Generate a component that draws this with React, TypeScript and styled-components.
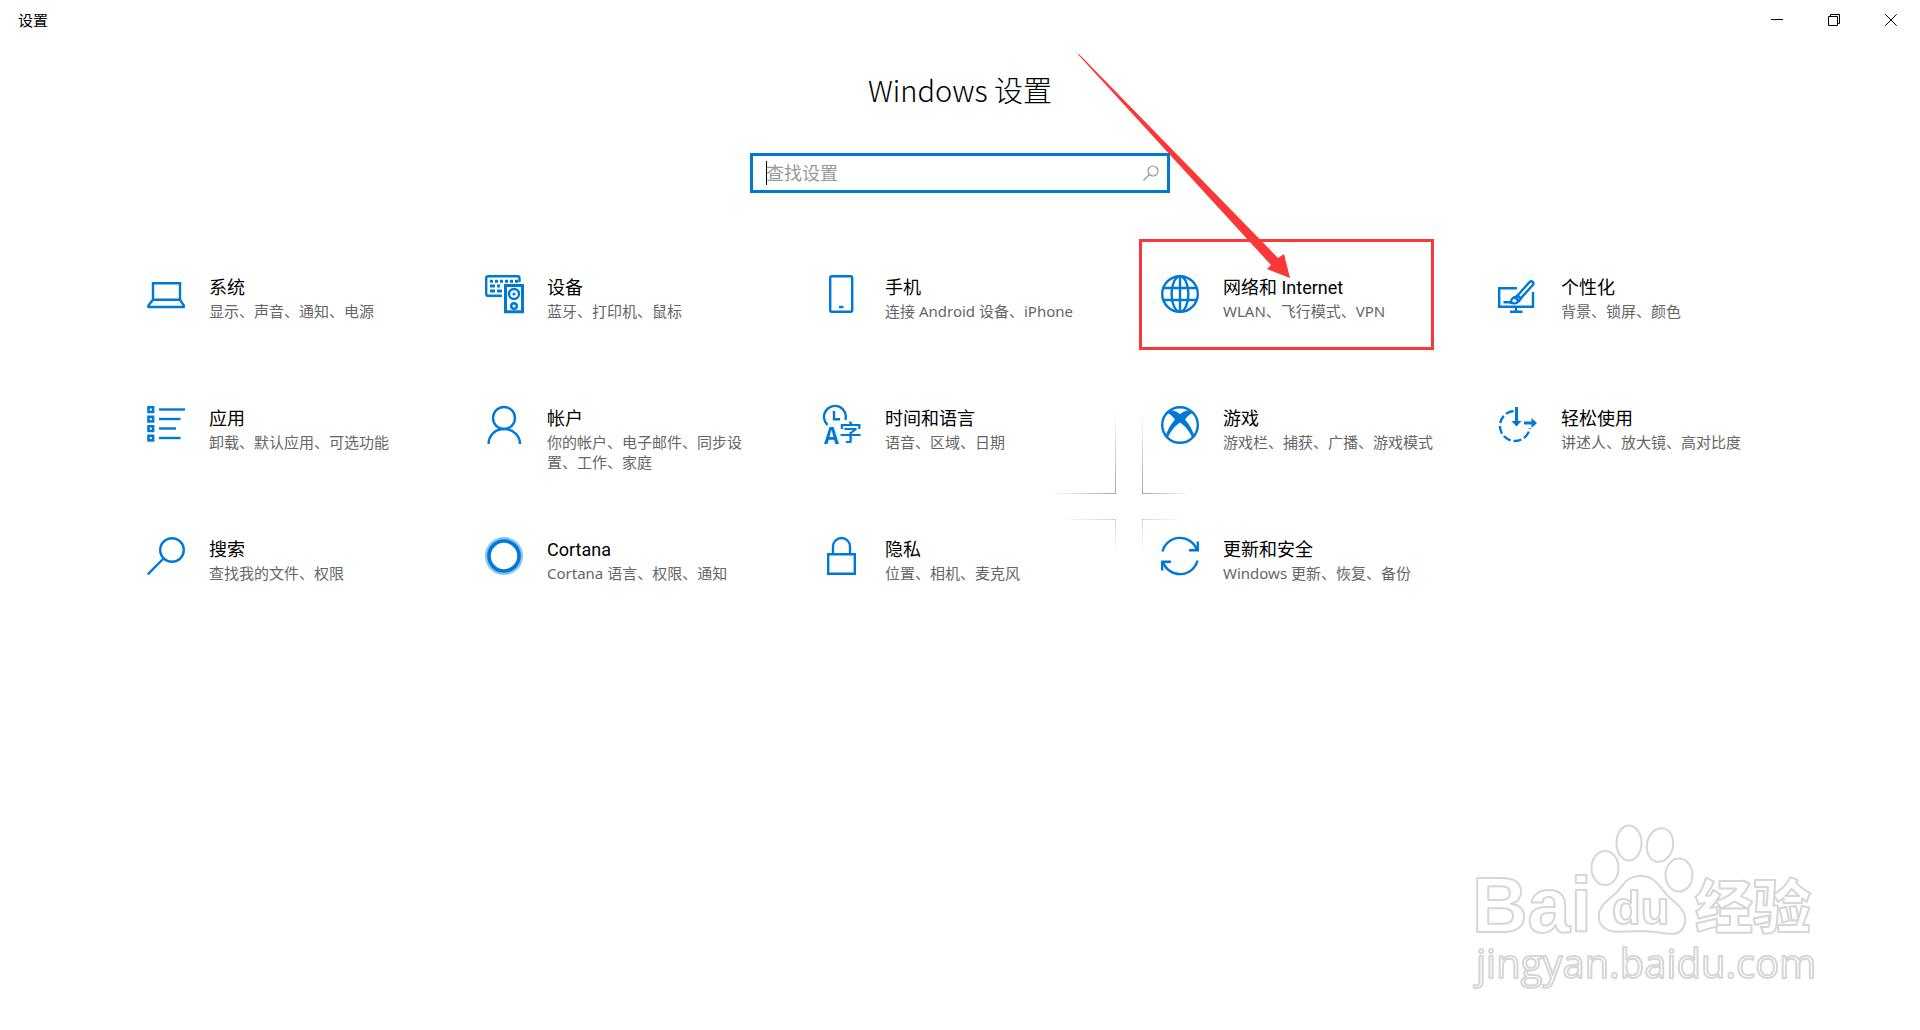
import React from 'react';
import styled, { createGlobalStyle } from 'styled-components';

const BLUE = '#0078d7';
const RED = '#fb3838';

const GlobalStyle = createGlobalStyle`
  *, *::before, *::after { box-sizing: border-box; }
  body {
    margin: 0;
    background: #fff;
    color: #000;
    font-family: "Noto Sans CJK SC", "Open Sans", sans-serif;
  }
`;

const Page = styled.div`
  position: relative;
  min-height: 100vh;
  overflow: hidden;
`;

const TitleBar = styled.header`
  display: flex;
  align-items: center;
  justify-content: space-between;
  height: 40px;
  padding: 0 1px 0 18px;
  font-size: 15px;
  line-height: 20px;
`;

const WindowControls = styled.div`
  display: flex;
  height: 100%;
`;

const WindowButton = styled.button`
  display: flex;
  align-items: center;
  justify-content: center;
  width: 57px;
  height: 100%;
  padding: 0;
  border: 0;
  background: transparent;
`;

const Main = styled.main`
  display: flex;
  flex-direction: column;
  align-items: center;
`;

const Heading = styled.h1`
  margin: 27px 0 42px;
  font-size: 29px;
  line-height: 44px;
  font-weight: 300;
`;

const SearchBox = styled.label`
  display: flex;
  align-items: center;
  width: 420px;
  max-width: 100%;
  height: 40px;
  padding: 0 8px 0 13px;
  border: 3px solid ${BLUE};
`;

const Caret = styled.span`
  width: 1px;
  height: 24px;
  margin-right: -1px;
  background: #000;
`;

const SearchInput = styled.input`
  flex: 1;
  min-width: 0;
  padding: 0 0 2px;
  border: 0;
  outline: 0;
  background: transparent;
  font: inherit;
  font-size: 18px;
  line-height: 24px;
  &::placeholder { color: #999; opacity: 1; }
`;

const Grid = styled.nav`
  display: grid;
  grid-template-columns: repeat(auto-fill, 338px);
  justify-content: center;
  row-gap: 20px;
  width: 100%;
  max-width: 1690px;
  margin-top: 46px;
`;

const Tile = styled.a<{ $marked?: boolean }>`
  display: flex;
  gap: 24px;
  min-height: 111px;
  margin: 0 33px 0 10px;
  padding: 33px 0 0 19px;
  border: 3px solid ${(p) => (p.$marked ? RED : 'transparent')};
  color: inherit;
  text-decoration: none;
`;

const TileIcon = styled.svg`
  flex: none;
  width: 38px;
  height: 38px;
  overflow: visible;
  fill: none;
  stroke: ${BLUE};
  stroke-width: 2.4;
`;

const TileText = styled.span`
  display: flex;
  flex: none;
  flex-direction: column;
  width: 216px;
`;

const TileTitle = styled.span`
  font-family: Roboto, "Noto Sans CJK SC", sans-serif;
  font-size: 18px;
  line-height: 26px;
`;

const TileDetail = styled.span`
  color: #666;
  font-family: "Noto Sans", "Noto Sans CJK SC", sans-serif;
  font-size: 15px;
  line-height: 20px;
`;

const Arrow = styled.svg`
  position: absolute;
  top: 54px;
  left: calc(50% + 118px);
  width: 214px;
  height: 226px;
  pointer-events: none;
`;

const CrossMark = styled.svg`
  position: absolute;
  top: 400px;
  left: calc(50% + 80px);
  width: 160px;
  height: 160px;
  pointer-events: none;
`;

const Watermark = styled.svg`
  position: absolute;
  right: 80px;
  bottom: 30px;
  width: 390px;
  height: 190px;
  pointer-events: none;
`;

const solid = { fill: BLUE, stroke: 'none' };

const icons: Record<string, React.ReactNode> = {
  system: (
    <>
      <path d="M6 8.2H33V24.8H6Z" />
      <path d="M6 24.8L1.4 30.5V32H36.8V30.5L33 24.8" strokeLinejoin="round" />
    </>
  ),
  devices: (
    <>
      <path d="M17 20.8H3.2Q1.2 20.8 1.2 18.8V3.2Q1.2 1.2 3.2 1.2H32.5Q34.5 1.2 34.5 3.2V7" />
      <path d="M5 6.2H33" strokeWidth="3" strokeDasharray="3 2" />
      <path d="M5 11H10M12 11H15M5 16H10M12 16H17" strokeWidth="3" />
      <path d="M20.5 10.5H37.5V36.8H20.5Z" strokeWidth="3" />
      <circle cx="29" cy="19" r="5" />
      <circle cx="29" cy="19" r="1.6" style={solid} />
      <circle cx="29" cy="31" r="2.8" />
    </>
  ),
  phone: (
    <>
      <rect x="7.2" y="1.2" width="22" height="35.6" rx="1.5" />
      <path d="M16 32H20.5" />
    </>
  ),
  network: (
    <>
      <circle cx="19" cy="19" r="17.8" />
      <ellipse cx="19" cy="19" rx="8.4" ry="17.8" />
      <path d="M19 1V37M2.5 13H35.5M2.5 25H35.5" />
    </>
  ),
  personal: (
    <>
      <path d="M18 13.2H.2V31.8H34V17" />
      <path d="M17 32V37M11 36.8H23.5" />
      <path d="M18.5 20.5L30.5 7.2Q32.2 5.5 33.8 7Q35.2 8.5 33.6 10.3L22 23" />
      <path d="M18.5 20.5L22 23.5L20 26L16 22.6Z" />
      <path d="M4.5 27.3H11Q12.5 26.5 12.7 24.5Q14.5 21 17.5 23Q20.5 26 17.5 28Q15.5 29 10.5 27.3" />
    </>
  ),
  apps: (
    <>
      {[3.5, 13, 22.5, 32].map((y, i) => (
        <g key={y}>
          <rect x="1.5" y={y - 2.2} width="4.6" height="4.6" strokeWidth="2.6" />
          <path d={`M12 ${y}H${[38, 33.5, 29, 33.5][i]}`} />
        </g>
      ))}
    </>
  ),
  accounts: (
    <>
      <circle cx="19" cy="12" r="11" />
      <path d="M3.6 38C3.6 29.5 10 23 19 23S35 29.5 35 38" />
    </>
  ),
  time: (
    <>
      <path d="M4.5 19A11 11 0 1 1 22.5 14" />
      <path d="M11 5V13.3H17" />
      <text x="1" y="38" fontSize="23" fontWeight="700" fontFamily="Noto Sans CJK SC, sans-serif" style={solid}>A</text>
      <text x="16" y="35" fontSize="23" fontWeight="500" fontFamily="Noto Sans CJK SC, sans-serif" style={solid}>字</text>
    </>
  ),
  games: (
    <>
      <circle cx="19" cy="19" r="17.8" />
      <path d="M6 7Q8 4.500 12 4.500Q15.500 5 19 8Q22.500 5 26 4.500Q30 4.500 32 7Q28 8 24 13.500Q31.500 22 33.500 31L31.500 32Q27 22 19 16.500Q11 22 6.500 32L4.500 31Q6.500 22 14 13.500Q10 8 6 7Z" style={solid} />
    </>
  ),
  ease: (
    <>
      <path d="M14.5 5A15 15 0 1 0 30.8 22" strokeDasharray="8 3" />
      <path d="M17.5 1V17M25 17H33" strokeWidth="3" />
      <path d="M12.5 15H22.5L17.5 20.5ZM32.5 12V22L38 17Z" style={solid} />
    </>
  ),
  search: (
    <>
      <circle cx="25" cy="13" r="11.8" />
      <path d="M16.5 21.5L.8 37.3" />
    </>
  ),
  cortana: (
    <>
      <circle cx="19" cy="19" r="17.5" stroke="#8cc3ee" strokeWidth="3" />
      <circle cx="19" cy="19" r="15" strokeWidth="3.6" />
    </>
  ),
  privacy: (
    <>
      <path d="M5.2 17.2H31.8V36.8H5.2Z" />
      <path d="M10 17V9.5A8.5 8.5 0 0 1 27 9.5V17" />
    </>
  ),
  update: (
    <>
      <path d="M1.5 14.5A18 18 0 0 1 36 13" />
      <path d="M28 13.3H36.8V4.5" />
      <path d="M36.5 23.5A18 18 0 0 1 2 25" />
      <path d="M10 24.7H1.2V33.5" />
    </>
  ),
};

const tiles = [
  { icon: 'system', title: '系统', detail: '显示、声音、通知、电源' },
  { icon: 'devices', title: '设备', detail: '蓝牙、打印机、鼠标' },
  { icon: 'phone', title: '手机', detail: '连接 Android 设备、iPhone' },
  { icon: 'network', title: '网络和 Internet', detail: 'WLAN、飞行模式、VPN', marked: true },
  { icon: 'personal', title: '个性化', detail: '背景、锁屏、颜色' },
  { icon: 'apps', title: '应用', detail: '卸载、默认应用、可选功能' },
  { icon: 'accounts', title: '帐户', detail: '你的帐户、电子邮件、同步设置、工作、家庭' },
  { icon: 'time', title: '时间和语言', detail: '语音、区域、日期' },
  { icon: 'games', title: '游戏', detail: '游戏栏、捕获、广播、游戏模式' },
  { icon: 'ease', title: '轻松使用', detail: '讲述人、放大镜、高对比度' },
  { icon: 'search', title: '搜索', detail: '查找我的文件、权限' },
  { icon: 'cortana', title: 'Cortana', detail: 'Cortana 语言、权限、通知' },
  { icon: 'privacy', title: '隐私', detail: '位置、相机、麦克风' },
  { icon: 'update', title: '更新和安全', detail: 'Windows 更新、恢复、备份' },
];

const crossLines = [
  { x: 75, y: 10, w: 1, h: 84, fade: 'down', tone: 1 },
  { x: 102, y: 10, w: 1, h: 84, fade: 'down', tone: 1 },
  { x: 10, y: 93, w: 66, h: 1, fade: 'right', tone: 1 },
  { x: 102, y: 93, w: 50, h: 1, fade: 'left', tone: 1 },
  { x: 18, y: 119, w: 58, h: 1, fade: 'right', tone: 0.5 },
  { x: 102, y: 119, w: 42, h: 1, fade: 'left', tone: 0.5 },
  { x: 75, y: 119, w: 1, h: 35, fade: 'up', tone: 0.5 },
  { x: 102, y: 119, w: 1, h: 35, fade: 'up', tone: 0.5 },
];

function FadeStops({ id, x1 = 0, y1 = 0, x2 = 0, y2 = 0 }: { id: string; x1?: number; y1?: number; x2?: number; y2?: number }) {
  return (
    <linearGradient id={id} x1={x1} y1={y1} x2={x2} y2={y2}>
      <stop offset="0" stopColor="#a8a8a8" stopOpacity="0" />
      <stop offset="1" stopColor="#a8a8a8" />
    </linearGradient>
  );
}

export default function App() {
  return (
    <Page>
      <GlobalStyle />
      <TitleBar>
        <span>设置</span>
        <WindowControls>
          <WindowButton aria-label="最小化">
            <svg width="12" height="12" fill="none" stroke="#000"><path d="M0 5.5H12" /></svg>
          </WindowButton>
          <WindowButton aria-label="还原">
            <svg width="12" height="12" fill="none" stroke="#000">
              <path d="M.5 2.5H9.5V11.5H.5ZM2.5 2.5V.5H11.5V9.5H9.5" />
            </svg>
          </WindowButton>
          <WindowButton aria-label="关闭">
            <svg width="12" height="12" fill="none" stroke="#000"><path d="M.3 .3L11.7 11.7M11.7 .3L.3 11.7" /></svg>
          </WindowButton>
        </WindowControls>
      </TitleBar>

      <Main>
        <Heading>Windows 设置</Heading>
        <SearchBox>
          <Caret />
          <SearchInput type="text" placeholder="查找设置" aria-label="查找设置" />
          <svg width="16" height="16" fill="none" stroke="#999" strokeWidth="1.2">
            <circle cx="10" cy="6" r="5" />
            <path d="M6.5 9.5L.5 15.5" />
          </svg>
        </SearchBox>

        <Grid aria-label="设置">
          {tiles.map((t) => (
            <Tile key={t.icon} href={`#${t.icon}`} $marked={t.marked}>
              <TileIcon viewBox="0 0 38 38" aria-hidden="true">{icons[t.icon]}</TileIcon>
              <TileText>
                <TileTitle>{t.title}</TileTitle>
                <TileDetail>{t.detail}</TileDetail>
              </TileText>
            </Tile>
          ))}
        </Grid>
      </Main>

      <CrossMark viewBox="0 0 160 160" aria-hidden="true">
        <defs>
          <FadeStops id="down" y2={1} />
          <FadeStops id="up" y1={1} />
          <FadeStops id="right" x2={1} />
          <FadeStops id="left" x1={1} />
        </defs>
        {crossLines.map((l, i) => (
          <rect key={i} x={l.x} y={l.y} width={l.w} height={l.h} fill={`url(#${l.fade})`} opacity={l.tone} />
        ))}
      </CrossMark>

      <Arrow viewBox="0 0 214 226" aria-hidden="true">
        <path d="M0 0.500L1 0L200 204L206 200L212 224L189 215L193 211Z" fill={RED} />
      </Arrow>

      <Watermark viewBox="0 0 390 190" aria-hidden="true">
        <defs>
          <filter id="soft" x="-5%" y="-5%" width="110%" height="110%">
            <feGaussianBlur stdDeviation="0.7" />
          </filter>
        </defs>
        <g filter="url(#soft)" fill="#fff" stroke="#d6d6d6" strokeWidth="2" strokeLinejoin="round">
          <ellipse cx="155" cy="58" rx="13.5" ry="17" />
          <ellipse cx="179" cy="33" rx="12.5" ry="17.5" />
          <ellipse cx="210" cy="35" rx="13" ry="17" transform="rotate(12 210 35)" />
          <ellipse cx="229" cy="65" rx="13.5" ry="16.5" />
          <path d="M191 60C207 60 211 75 221 83C233 92 238 101 234 110C228 124 214 115 191 115C172 115 158 120 150 107C145 92 156 86 166 77C174 69 176 60 191 60Z" transform="translate(0 6)" />
          <text x="22" y="122" fontSize="77" fontWeight="700" fontFamily="Liberation Sans, sans-serif">Bai</text>
          <text x="162" y="114" fontSize="47" fontWeight="700" fontFamily="Liberation Sans, sans-serif">du</text>
          <text x="245" y="118" fontSize="58" fontWeight="900" fontFamily="Noto Sans CJK SC, sans-serif">经验</text>
          <text x="26" y="168" fontSize="40" fontWeight="500" fontFamily="Open Sans, sans-serif">jingyan.baidu.com</text>
        </g>
      </Watermark>
    </Page>
  );
}
